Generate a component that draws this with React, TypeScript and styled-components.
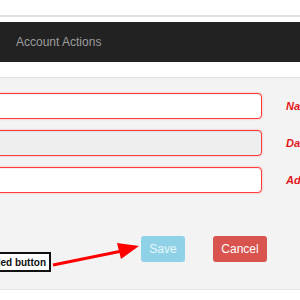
import styled, { createGlobalStyle } from "styled-components";

const GlobalStyle = createGlobalStyle`
  html, body {
    margin: 0;
    padding: 0;
    overflow: hidden;
    background: #fff;
    font-family: "Liberation Sans", Arial, sans-serif;
  }
`;

const Page = styled.div`
  position: relative;
  width: 300px;
  height: 300px;
  overflow: hidden;
  padding-top: 15px;
  box-sizing: border-box;
`;

const TopRule = styled.div`
  height: 2px;
  background: #e2e2e2;
  margin-bottom: 5px;
`;

const Navbar = styled.nav`
  height: 40px;
  background: #222;
  display: flex;
  align-items: center;
  padding-left: 16px;
  color: #9d9d9d;
  font-size: 12px;
`;

const Panel = styled.section`
  margin-top: 15px;
  height: 213px;
  background: #f3f3f3;
  border-top: 1px solid #e3e3e3;
  border-bottom: 1px solid #e3e3e3;
  padding-top: 15px;
  box-sizing: border-box;
`;

const Form = styled.div`
  margin-left: -20px;
  display: flex;
  flex-direction: column;
  gap: 11px;
`;

const Row = styled.div`
  display: grid;
  grid-template-columns: 282px auto;
  column-gap: 24px;
  align-items: center;
`;

const Input = styled.div<{ $disabled?: boolean }>`
  height: 26px;
  box-sizing: border-box;
  border: 1px solid #ff3b3b;
  border-radius: 4px;
  background: ${(p) => (p.$disabled ? "#eeeeee" : "#fff")};
  box-shadow: inset 0 1px 1px rgba(0, 0, 0, 0.06), 0 0 2px rgba(255, 80, 80, 0.5);
`;

const Label = styled.span`
  color: #e4161b;
  font-size: 11px;
  font-weight: bold;
  font-style: italic;
  white-space: nowrap;
`;

const Actions = styled.div`
  display: flex;
  gap: 28px;
  margin-top: 43px;
  padding-left: 141px;
`;

const Button = styled.button<{ $variant: "save" | "cancel" }>`
  height: 26px;
  padding: 0;
  border: none;
  border-radius: 3px;
  font-family: "Liberation Sans", Arial, sans-serif;
  font-size: 12px;
  color: ${(p) => (p.$variant === "save" ? "#e8f6fb" : "#fff")};
  background: ${(p) => (p.$variant === "save" ? "#8fd2e8" : "#d9534f")};
  width: ${(p) => (p.$variant === "save" ? "44px" : "54px")};
`;

const Callout = styled.div`
  position: absolute;
  left: -40px;
  top: 252px;
  width: 91px;
  height: 20px;
  box-sizing: border-box;
  border: 2px solid #111;
  background: #fff;
  font-size: 10px;
  font-weight: bold;
  color: #111;
  display: flex;
  align-items: center;
  justify-content: flex-end;
  padding-right: 3px;
`;

const Arrow = styled.svg`
  position: absolute;
  left: 0;
  top: 0;
  pointer-events: none;
`;

export default function App() {
  return (
    <Page>
      <GlobalStyle />
      <TopRule />
      <Navbar>Account Actions</Navbar>
      <Panel>
        <Form>
          <Row>
            <Input />
            <Label>Name</Label>
          </Row>
          <Row>
            <Input $disabled />
            <Label>Date</Label>
          </Row>
          <Row>
            <Input />
            <Label>Address</Label>
          </Row>
        </Form>
        <Actions>
          <Button $variant="save" disabled>
            Save
          </Button>
          <Button $variant="cancel">Cancel</Button>
        </Actions>
      </Panel>
      <Callout>Disabled button</Callout>
      <Arrow width="300" height="300" viewBox="0 0 300 300">
        <line x1="53" y1="265" x2="122" y2="251" stroke="#f00" strokeWidth="3" />
        <polygon points="139,246 117,243 121,259" fill="#f00" />
      </Arrow>
    </Page>
  );
}
